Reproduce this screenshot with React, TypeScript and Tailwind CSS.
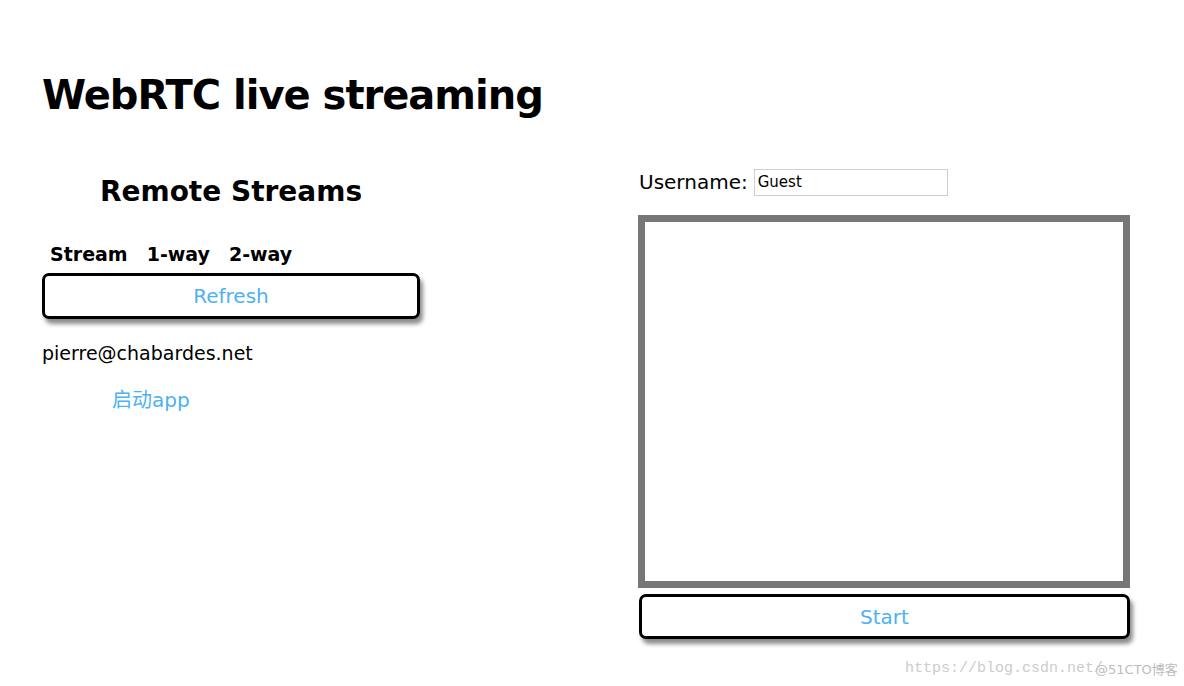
export default function App() {
  return (
    <div className="relative w-[1184px] h-[686px] bg-white overflow-hidden font-['DejaVu_Sans',sans-serif] text-black">
      <h1 className="absolute left-[42px] top-[69px] text-[40px] tracking-[-1px] font-bold leading-[52px]">WebRTC live streaming</h1>

      <div className="flex pt-[166px] pl-[42px]">
        {/* left column */}
        <div className="w-[378px] flex flex-col">
          <h2 className="text-center text-[28px] font-bold leading-[52px]">Remote Streams</h2>
          <div className="flex gap-[19px] pl-[8px] mt-[24px] text-[19px] font-bold leading-[24px]">
            <span>Stream</span>
            <span>1-way</span>
            <span>2-way</span>
          </div>
          <button className="mt-[7px] h-[46px] w-[378px] rounded-[7px] border-[3px] border-black bg-white text-[20px] text-[#4db1f3] shadow-[3px_5px_4px_rgba(0,0,0,0.45)]">
            Refresh
          </button>
          <div className="mt-[22px] text-[19px] leading-[24px]">pierre@chabardes.net</div>
          <a className="mt-[23px] ml-[70px] text-[20px] leading-[24px] text-[#4db1f3] font-['DejaVu_Sans','Noto_Sans_CJK_SC',sans-serif]">启动app</a>
        </div>

        {/* right column */}
        <div className="ml-[218px] w-[492px] flex flex-col">
          <div className="flex items-center gap-[6px] ml-[1px] mt-[2px]">
            <span className="text-[20px] leading-[28px]">Username:</span>
            <input
              defaultValue="Guest"
              className="w-[194px] h-[27px] border border-[#cfcfcf] px-[3px] text-[15px] outline-none"
            />
          </div>
          <div className="mt-[19px] h-[373px] border-[7px] border-[#777777] bg-white" />
          <button className="mt-[6px] ml-[1px] h-[45px] w-[491px] rounded-[7px] border-[3px] border-black bg-white text-[20px] text-[#4db1f3] shadow-[3px_5px_4px_rgba(0,0,0,0.45)]">
            Start
          </button>
        </div>
      </div>

      <div className="absolute left-[905px] top-[658px] flex items-center whitespace-nowrap text-[15px] text-[#cccccc] font-['Liberation_Mono',monospace]">
        <span>https://blog.csdn.net/</span>
        <span className="-ml-[8px] font-['DejaVu_Sans','Noto_Sans_CJK_SC',sans-serif] text-[13px] text-[#bdbdbd]">@51CTO博客</span>
      </div>
    </div>
  );
}
